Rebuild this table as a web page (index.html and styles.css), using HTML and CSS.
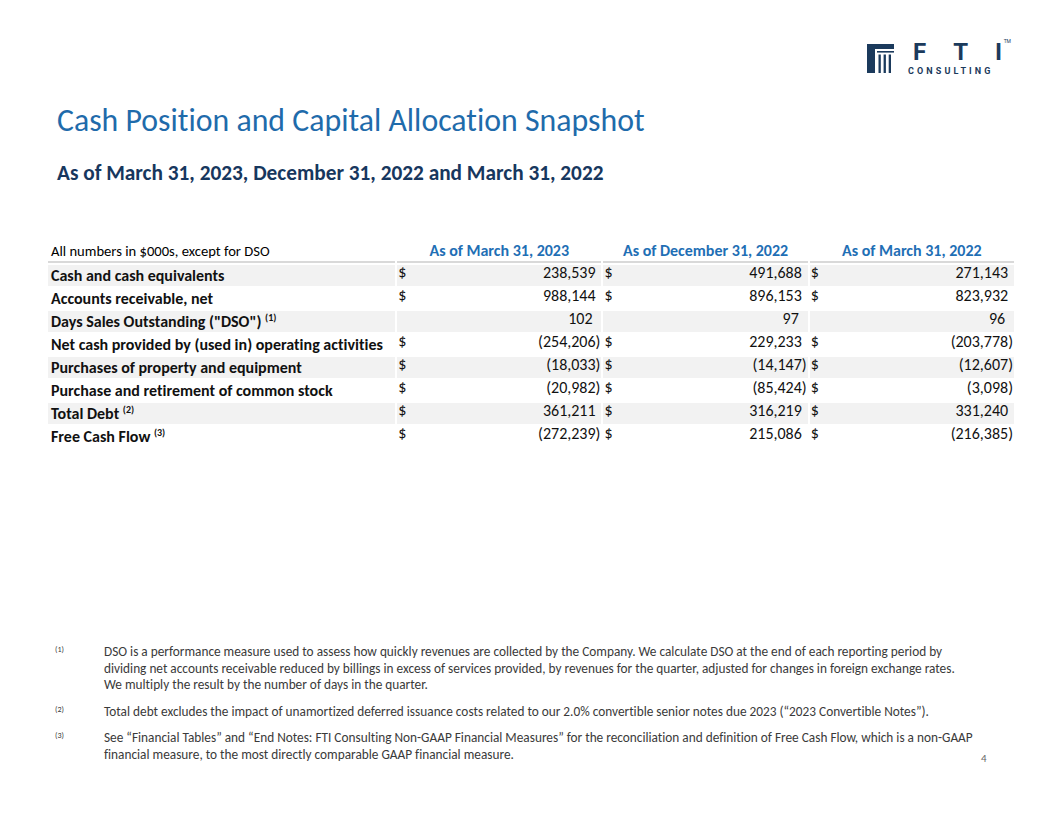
FILE: index.html
```html
<!DOCTYPE html>
<html lang="en">
<head>
<meta charset="utf-8">
<title>Cash Position and Capital Allocation Snapshot</title>
<link rel="stylesheet" href="styles.css">
</head>
<body>
<div class="page">
  <header class="top">
    <div class="logo">
      <svg class="logo-mark" width="27" height="29" viewBox="0 0 27 29" aria-hidden="true">
        <rect x="0" y="0" width="27" height="5" fill="#1b3a5c"/>
        <rect x="0" y="0" width="8" height="29" fill="#1b3a5c"/>
        <rect x="10" y="7" width="17" height="1.6" fill="#1b3a5c"/>
        <rect x="11.5" y="10.5" width="2.3" height="18.5" fill="#1b3a5c"/>
        <rect x="16.6" y="10.5" width="2.3" height="18.5" fill="#1b3a5c"/>
        <rect x="21.7" y="10.5" width="2.3" height="18.5" fill="#1b3a5c"/>
      </svg>
      <div class="logo-text">
        <div class="fti"><span>F</span><span>T</span><span>I</span><sup class="tm">TM</sup></div>
        <div class="consulting">CONSULTING</div>
      </div>
    </div>
  </header>

  <h1 class="title">Cash Position and Capital Allocation Snapshot</h1>
  <h2 class="subtitle">As of March 31, 2023, December 31, 2022 and March 31, 2022</h2>

  <table class="fin">
    <colgroup>
      <col class="c-label"><col class="c-val"><col class="c-val"><col class="c-val">
    </colgroup>
    <thead>
      <tr>
        <th class="h-label">All numbers in $000s, except for DSO</th>
        <th class="h-col">As of March 31, 2023</th>
        <th class="h-col">As of December 31, 2022</th>
        <th class="h-col">As of March 31, 2022</th>
      </tr>
    </thead>
    <tbody>
      <tr class="shade">
        <td class="lbl">Cash and cash equivalents</td>
        <td><div class="v"><span>$</span><span>238,539<i>)</i></span></div></td>
        <td><div class="v"><span>$</span><span>491,688<i>)</i></span></div></td>
        <td><div class="v"><span>$</span><span>271,143<i>)</i></span></div></td>
      </tr>
      <tr>
        <td class="lbl">Accounts receivable, net</td>
        <td><div class="v"><span>$</span><span>988,144<i>)</i></span></div></td>
        <td><div class="v"><span>$</span><span>896,153<i>)</i></span></div></td>
        <td><div class="v"><span>$</span><span>823,932<i>)</i></span></div></td>
      </tr>
      <tr class="shade">
        <td class="lbl">Days Sales Outstanding ("DSO") <sup>(1)</sup></td>
        <td><div class="v dso"><span></span><span>102<i>)</i></span></div></td>
        <td><div class="v dso"><span></span><span>97<i>)</i></span></div></td>
        <td><div class="v dso"><span></span><span>96<i>)</i></span></div></td>
      </tr>
      <tr>
        <td class="lbl">Net cash provided by (used in) operating activities</td>
        <td><div class="v"><span>$</span><span>(254,206)</span></div></td>
        <td><div class="v"><span>$</span><span>229,233<i>)</i></span></div></td>
        <td><div class="v"><span>$</span><span>(203,778)</span></div></td>
      </tr>
      <tr class="shade">
        <td class="lbl">Purchases of property and equipment</td>
        <td><div class="v"><span>$</span><span>(18,033)</span></div></td>
        <td><div class="v"><span>$</span><span>(14,147)</span></div></td>
        <td><div class="v"><span>$</span><span>(12,607)</span></div></td>
      </tr>
      <tr>
        <td class="lbl">Purchase and retirement of common stock</td>
        <td><div class="v"><span>$</span><span>(20,982)</span></div></td>
        <td><div class="v"><span>$</span><span>(85,424)</span></div></td>
        <td><div class="v"><span>$</span><span>(3,098)</span></div></td>
      </tr>
      <tr class="shade">
        <td class="lbl">Total Debt <sup>(2)</sup></td>
        <td><div class="v"><span>$</span><span>361,211<i>)</i></span></div></td>
        <td><div class="v"><span>$</span><span>316,219<i>)</i></span></div></td>
        <td><div class="v"><span>$</span><span>331,240<i>)</i></span></div></td>
      </tr>
      <tr>
        <td class="lbl">Free Cash Flow <sup>(3)</sup></td>
        <td><div class="v"><span>$</span><span>(272,239)</span></div></td>
        <td><div class="v"><span>$</span><span>215,086<i>)</i></span></div></td>
        <td><div class="v"><span>$</span><span>(216,385)</span></div></td>
      </tr>
    </tbody>
  </table>

  <div class="notes">
    <span class="mark">(1)</span>
    <p>DSO is a performance measure used to assess how quickly revenues are collected by the Company. We calculate DSO at the end of each reporting period by<br>dividing net accounts receivable reduced by billings in excess of services provided, by revenues for the quarter, adjusted for changes in foreign exchange rates.<br>We multiply the result by the number of days in the quarter.</p>
    <span></span>

    <span class="mark">(2)</span>
    <p>Total debt excludes the impact of unamortized deferred issuance costs related to our 2.0% convertible senior notes due 2023 (“2023 Convertible Notes”).</p>
    <span></span>

    <span class="mark">(3)</span>
    <p>See “Financial Tables” and “End Notes: FTI Consulting Non-GAAP Financial Measures” for the reconciliation and definition of Free Cash Flow, which is a non-GAAP<br>financial measure, to the most directly comparable GAAP financial measure.</p>
    <span class="pagenum">4</span>
  </div>
</div>
</body>
</html>
```

FILE: styles.css
```css
html, body {
  margin: 0;
  padding: 0;
  background: #ffffff;
}

body {
  font-family: Carlito, Calibri, Lato, "Open Sans", sans-serif;
  font-variant-ligatures: none;
  color: #000;
}

.page {
  width: 1056px;
  height: 816px;
  overflow: hidden;
}

/* ---------- logo ---------- */
.top {
  display: flex;
  justify-content: flex-end;
  padding: 43px 49px 0 0;
}

.logo {
  display: flex;
  align-items: flex-start;
  gap: 14px;
}

.logo-mark {
  display: block;
  margin-top: 1px;
}

.logo-text {
  display: flex;
  flex-direction: column;
  width: 99px;
  color: #1b3a5c;
  font-family: Roboto, "DejaVu Sans", sans-serif;
}

.fti {
  display: flex;
  justify-content: space-between;
  position: relative;
  padding: 0 5px 0 5px;
  font-size: 24px;
  font-weight: 700;
  line-height: 19px;
  height: 19px;
}

.fti .tm {
  position: absolute;
  right: -4px;
  top: -4px;
  font-size: 5px;
  line-height: 5px;
  font-weight: 400;
}

.consulting {
  margin-top: 4px;
  font-size: 9px;
  font-weight: 700;
  letter-spacing: 3.1px;
  line-height: 10px;
}

/* ---------- headings ---------- */
.title {
  margin: 26px 0 0 57px;
  font-size: 31.8px;
  font-weight: 400;
  line-height: 38px;
  color: #1f6bab;
}

.subtitle {
  margin: 21px 0 0 57px;
  font-size: 21.3px;
  font-weight: 700;
  line-height: 25px;
  color: #17375e;
}

/* ---------- table ---------- */
.fin {
  margin: 53px 0 0 46px;
  border-collapse: separate;
  border-spacing: 2px 2px;
  table-layout: fixed;
  width: 970px;
  font-size: 16px;
}

.c-label { width: 345px; }
.c-val { width: 203px; }

.fin th {
  padding: 0 0 1px 0;
  height: 19px;
  vertical-align: bottom;
  border-bottom: 2px solid #d9d9d9;
}

.h-label {
  text-align: left;
  font-weight: 400;
  font-size: 14.6px;
  padding-left: 3px !important;
}

.h-col {
  text-align: center;
  color: #1f6fb5;
  font-weight: 700;
}

.fin td {
  height: 21px;
  padding: 0;
  vertical-align: top;
}

.fin .shade td {
  background: #f2f2f2;
}

.lbl {
  font-weight: 700;
  font-size: 16px;
  line-height: 20px;
  white-space: nowrap;
  color: #111;
}

.lbl sup {
  font-size: 10px;
  line-height: 0;
}

.fin td.lbl {
  height: 20px;
  padding: 1px 0 0 3px;
}

.v {
  display: flex;
  justify-content: space-between;
  padding: 1px 1px 0 1px;
  line-height: 14px;
  height: 21px;
  box-sizing: border-box;
  color: #111;
}

.v.dso {
  padding-right: 4px;
}

.v i {
  visibility: hidden;
  font-style: normal;
}

/* ---------- notes ---------- */
.notes {
  display: grid;
  grid-template-columns: 49px 877px 1fr;
  row-gap: 10px;
  margin: 195px 0 0 55px;
  font-size: 13.3px;
  line-height: 16.5px;
  color: #3a3a3a;
}

.notes p {
  margin: 0;
  white-space: nowrap;
}

.mark {
  font-size: 8px;
  line-height: 10px;
}

.pagenum {
  align-self: end;
  margin-bottom: -3px;
  font-size: 11px;
  color: #666;
  line-height: 14px;
}
```
